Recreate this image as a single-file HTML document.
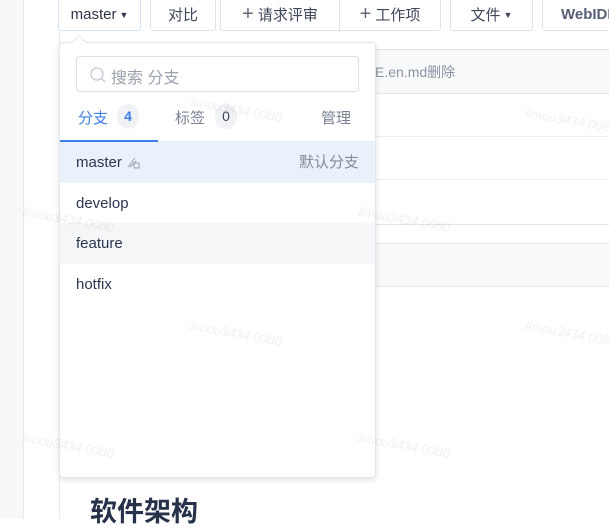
<!DOCTYPE html>
<html><head><meta charset="utf-8"><style>
*{box-sizing:border-box;margin:0;padding:0}
body{width:609px;height:519px;overflow:hidden;background:#fff;font-family:"Liberation Sans","Noto Sans CJK SC",sans-serif;position:relative;color:#2e3a4f}
.abs{position:absolute}
.btn{position:absolute;top:-4px;height:35px;border:1px solid #dfe3e8;border-radius:3px;background:#fff;font-size:15px;color:#40485b;display:flex;align-items:center;justify-content:center;padding-top:2px}
.wm{position:absolute;font-size:13px;color:#000;opacity:.06;transform:rotate(10deg);white-space:nowrap;font-style:italic}
.item{position:absolute;left:0;width:315px;height:41px;font-size:15px;line-height:41px;padding-left:16px;color:#2b3650}
</style></head><body>
<div class="abs" style="left:0;top:0;width:24px;height:519px;background:#f7f8f9;border-right:1px solid #e8eaed"></div>
<div class="abs" style="left:59px;top:0;width:1px;height:519px;background:#e6e8eb"></div>
<!-- right panel -->
<div class="abs" style="left:300px;top:49px;width:309px;height:45px;background:#f8f9fa;border-top:1px solid #dfe2e6;border-bottom:1px solid #e1e4e8"></div>
<div class="abs" style="left:375px;top:62px;font-size:14px;color:#8b93a3">E.en.md删除</div>
<div class="abs" style="left:300px;top:136px;width:309px;height:1px;background:#eceef1"></div>
<div class="abs" style="left:300px;top:179px;width:309px;height:1px;background:#eceef1"></div>
<div class="abs" style="left:300px;top:224px;width:309px;height:1px;background:#e1e4e8"></div>
<div class="abs" style="left:300px;top:243px;width:309px;height:44px;background:#f8f9fa;border-top:1px solid #e1e4e8;border-bottom:1px solid #e1e4e8"></div>
<div class="abs" style="left:90px;top:490px;font-size:27px;font-weight:bold;color:#27324a">软件架构</div>
<!-- buttons -->
<div class="btn" style="left:58px;width:83px;border-color:#d6e4f7;color:#2e3545">master<span style="font-size:9px;margin-left:3px">▼</span></div>
<div class="btn" style="left:150px;width:66px">对比</div>
<div class="btn" style="left:220px;width:221px;justify-content:flex-start"><span style="width:119px;text-align:center;border-right:1px solid #dfe3e8;line-height:33px"><span style="font-size:20px;color:#667;font-weight:300">+</span> 请求评审</span><span style="width:100px;text-align:center"><span style="font-size:20px;color:#667">+</span> 工作项</span></div>
<div class="btn" style="left:450px;width:83px">文件<span style="font-size:9px;margin-left:3px">▼</span></div>
<div class="btn" style="left:542px;width:120px;justify-content:flex-start;padding-left:18px;font-weight:bold;color:#555f75">WebIDE</div>
<!-- dropdown -->
<div class="abs" style="left:59px;top:42px;width:317px;height:436px;background:#fff;border:1px solid #e3e6ea;border-radius:4px;box-shadow:0 2px 6px rgba(0,0,0,.12)">
 <div class="abs" style="left:14px;top:-6px;width:10px;height:10px;background:#fff;border-left:1px solid #e3e6ea;border-top:1px solid #e3e6ea;transform:rotate(45deg)"></div>
 <div class="abs" style="left:16px;top:13px;width:283px;height:36px;border:1px solid #dcdfe4;border-radius:4px">
  <svg class="abs" style="left:12px;top:9px" width="18" height="18" viewBox="0 0 18 18"><circle cx="8" cy="8" r="6" fill="none" stroke="#c3c8d0" stroke-width="1.3"/><path d="M12.5 12.5L16 16" stroke="#c3c8d0" stroke-width="1.3"/></svg>
  <span class="abs" style="left:34px;top:7px;font-size:16px;color:#9aa1ad">搜索 分支</span>
 </div>
 <div class="abs" style="left:18px;top:64px;font-size:15px;color:#3f7ee8">分支</div>
 <div class="abs" style="left:57px;top:61px;width:22px;height:25px;border-radius:11px;background:#f0f2f5;font-size:14px;font-weight:bold;color:#3f7ee8;text-align:center;line-height:25px">4</div>
 <div class="abs" style="left:115px;top:64px;font-size:15px;color:#7a8293">标签</div>
 <div class="abs" style="left:155px;top:61px;width:22px;height:25px;border-radius:11px;background:#f0f2f5;font-size:14px;color:#3b4357;text-align:center;line-height:25px">0</div>
 <div class="abs" style="left:261px;top:64px;font-size:15px;color:#7a8293">管理</div>
 <div class="abs" style="left:0;top:98px;width:317px;height:1px;background:#eceef1"></div>
 <div class="abs" style="left:0;top:97px;width:98px;height:2px;background:#3f7ee8"></div>
 <div class="item" style="top:99px;width:315px;background:#ebf1fb">master <svg width="14" height="14" viewBox="0 0 14 14" style="vertical-align:-2px"><path d="M2 12L9 3M4 12l6 -6" stroke="#9aa1ad" fill="none"/><rect x="8" y="8" width="5" height="5" fill="none" stroke="#9aa1ad"/></svg><span style="position:absolute;right:16px;color:#848c9b">默认分支</span></div>
 <div class="item" style="top:140px">develop</div>
 <div class="item" style="top:180px;width:315px;background:#f5f6f8">feature</div>
 <div class="item" style="top:221px">hotfix</div>
</div>
<div class="wm" style="left:190px;top:102px">limou3434 0080</div>
<div class="wm" style="left:525px;top:113px">limou3434 0080</div>
<div class="wm" style="left:22px;top:212px">limou3434 0080</div>
<div class="wm" style="left:358px;top:212px">limou3434 0080</div>
<div class="wm" style="left:190px;top:326px">limou3434 0080</div>
<div class="wm" style="left:525px;top:326px">limou3434 0080</div>
<div class="wm" style="left:22px;top:438px">limou3434 0080</div>
<div class="wm" style="left:358px;top:438px">limou3434 0080</div>
</body></html>
